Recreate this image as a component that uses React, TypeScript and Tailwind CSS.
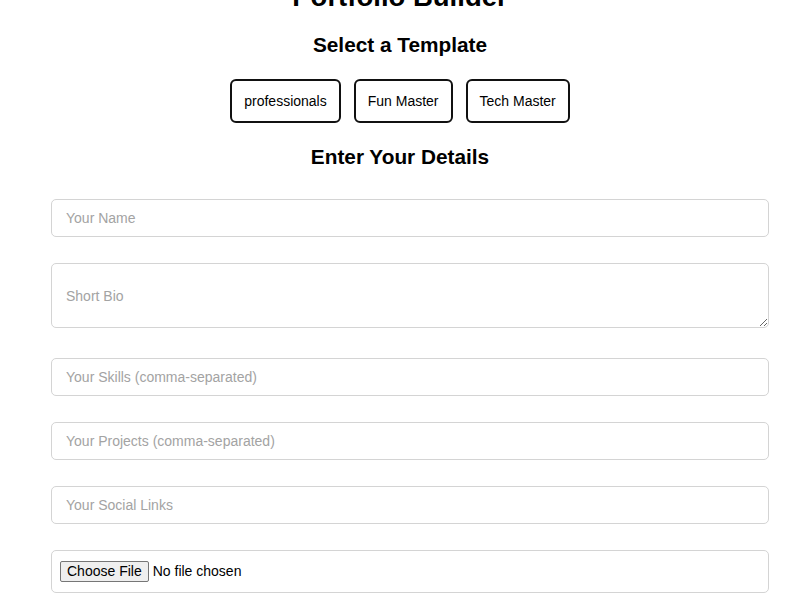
import { useState } from 'react';

const templates = ['professionals', 'Fun Master', 'Tech Master'];

const fieldClass =
  'block ml-[51px] w-[718px] h-[38px] px-[14px] border border-[#d4d4d4] rounded-[5px] bg-white text-[14px] leading-4 text-black placeholder:text-[#a3a3a3] outline-none';

export default function App() {
  const [template, setTemplate] = useState('professionals');

  return (
    <div className="bg-white min-h-[600px] overflow-hidden font-['Liberation_Sans',Arial,sans-serif] text-black">
      <div className="-mt-[19px] pb-8">
        <h1 className="text-center text-[27.5px] leading-[32px] font-bold">Portfolio Builder</h1>

        <h2 className="mt-[20px] text-center text-[20.8px] leading-6 font-bold">Select a Template</h2>

        <div className="mt-[22px] flex justify-center gap-[13px]">
          {templates.map((t) => (
            <button
              key={t}
              onClick={() => setTemplate(t)}
              className={`px-[12px] py-[12px] border-2 border-[#111] rounded-[6px] bg-white text-[14px] leading-4 text-black ${
                template === t ? 'cursor-default' : 'cursor-pointer'
              }`}
            >
              {t}
            </button>
          ))}
        </div>

        <h2 className="mt-[22px] text-center text-[20.8px] leading-6 font-bold">Enter Your Details</h2>

        <form className="mt-[30px]" onSubmit={(e) => e.preventDefault()}>
          <input type="text" placeholder="Your Name" className={fieldClass} />
          <textarea
            placeholder="Short Bio"
            className="block mt-[26px] ml-[51px] w-[718px] h-[65px] px-[14px] pt-[24px] border border-[#d4d4d4] rounded-[5px] bg-white text-[14px] leading-4 text-black placeholder:text-[#a3a3a3] outline-none"
          />
          <input type="text" placeholder="Your Skills (comma-separated)" className={`${fieldClass} mt-[30px]`} />
          <input type="text" placeholder="Your Projects (comma-separated)" className={`${fieldClass} mt-[26px]`} />
          <input type="text" placeholder="Your Social Links" className={`${fieldClass} mt-[26px]`} />
          <input
            type="file"
            className="block mt-[26px] ml-[51px] w-[718px] py-[10px] pl-[8px] border border-[#d4d4d4] rounded-[5px] bg-white text-[14px] leading-[21px] text-black file:mr-[4px] file:px-[6px] file:py-px file:bg-[#efefef] file:border file:border-solid file:border-[#767676] file:rounded-[2px] file:text-[14px] file:leading-[17px] file:text-black"
          />
        </form>
      </div>
    </div>
  );
}
